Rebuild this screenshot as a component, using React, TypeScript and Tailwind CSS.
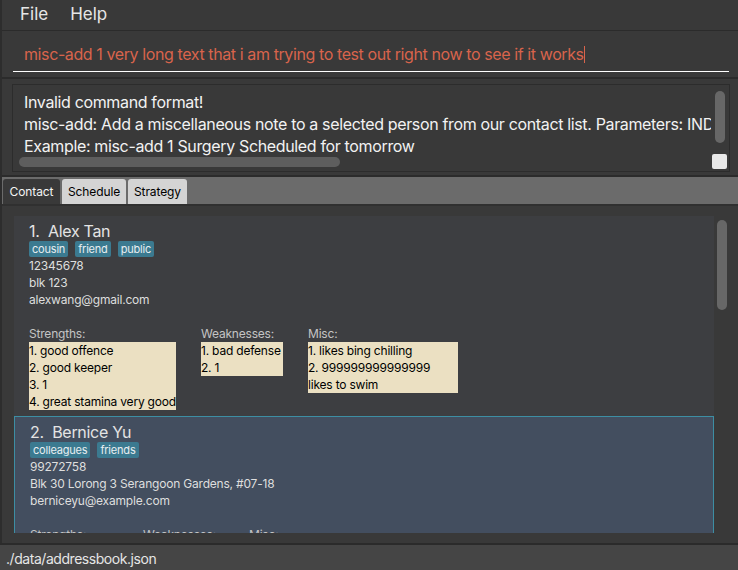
import React from "react";

const FONT = { fontFamily: "Inter, 'Noto Sans', sans-serif" };

function Tag({ label }: { label: string }) {
  return (
    <span className="h-[16px] px-[3px] rounded-[2px] bg-[#3b7a90] text-[#e8eef0] text-[11px] tracking-[-0.2px] leading-[16px]">
      {label}
    </span>
  );
}

function NoteBox({ label, items, width }: { label: string; items: string[]; width: string }) {
  return (
    <div className="flex flex-col">
      <div className="text-[12px] tracking-[-0.2px] leading-[17px] text-[#c4c4c4] whitespace-nowrap">{label}</div>
      <div className={`bg-[#ebe0c2] text-black text-[12px] tracking-[-0.2px] leading-[17px] whitespace-nowrap ${width}`}>
        {items.map((t, i) => (
          <div key={i}>{t}</div>
        ))}
      </div>
    </div>
  );
}

type Person = {
  idx: number;
  name: string;
  tags: string[];
  phone: string;
  address: string;
  email: string;
  strengths: string[];
  weaknesses: string[];
  misc: string[];
  widths: [string, string, string];
  colW: [string, string];
};

const people: Person[] = [
  {
    idx: 1,
    name: "Alex Tan",
    tags: ["cousin", "friend", "public"],
    phone: "12345678",
    address: "blk 123",
    email: "alexwang@gmail.com",
    strengths: ["1. good offence", "2. good keeper", "3. 1", "4. great stamina very good"],
    weaknesses: ["1. bad defense", "2. 1"],
    misc: ["1. likes bing chilling", "2. 999999999999999", "likes to swim"],
    widths: ["w-[147px]", "w-[82px]", "w-[150px]"],
    colW: ["w-[147px]", "w-[82px]"],
  },
  {
    idx: 2,
    name: "Bernice Yu",
    tags: ["colleagues", "friends"],
    phone: "99272758",
    address: "Blk 30 Lorong 3 Serangoon Gardens, #07-18",
    email: "berniceyu@example.com",
    strengths: ["1. good passing"],
    weaknesses: ["1. slow"],
    misc: ["1. plays on weekends"],
    widths: ["w-[88px]", "w-[81px]", "w-[130px]"],
    colW: ["w-[88px]", "w-[81px]"],
  },
];

function Card({ p, selected }: { p: Person; selected?: boolean }) {
  return (
    <div
      className={
        selected
          ? "shrink-0 bg-[#434e5f] border border-[#3d8ea3] pl-[15px] pt-[6px] pb-[5px]"
          : "shrink-0 bg-[#3d3e41] border border-transparent pl-[14px] pt-[5px] pb-[5px]"
      }
    >
      <div className="text-[16px] tracking-[-0.3px] leading-[19px] text-[#e4e4e4] whitespace-nowrap">
        {p.idx}.&nbsp;&nbsp;{p.name}
      </div>
      <div className="flex gap-[7px] h-[16px]">
        {p.tags.map((t) => (
          <Tag key={t} label={t} />
        ))}
      </div>
      <div className="text-[12px] tracking-[-0.2px] leading-[17px] text-[#dedede]">
        <div>{p.phone}</div>
        <div>{p.address}</div>
        <div>{p.email}</div>
        <div className="h-[17px]" />
      </div>
      <div className="flex gap-[25px]">
        <div className={p.colW[0]}>
          <NoteBox label="Strengths:" items={p.strengths} width={p.widths[0]} />
        </div>
        <div className={p.colW[1]}>
          <NoteBox label="Weaknesses:" items={p.weaknesses} width={p.widths[1]} />
        </div>
        <NoteBox label="Misc:" items={p.misc} width={p.widths[2]} />
      </div>
    </div>
  );
}

export default function App() {
  return (
    <div className="w-[738px] h-[570px] flex flex-col bg-[#393939] overflow-hidden" style={FONT}>
      <div className="flex-1 min-h-0 flex flex-col border-l-2 border-[#2d2d2d]">
        {/* Menu bar */}
        <div className="h-[31px] shrink-0 flex items-center border-b border-[#2b2b2b] text-[17px] text-[#e6e6e6]">
          <span className="ml-[18px]">File</span>
          <span className="ml-[22px]">Help</span>
        </div>

        {/* Command box */}
        <div className="h-[48px] shrink-0 pl-[11px] pr-[9px] border-b-2 border-[#2b2b2b]">
          <div className="h-[41px] border-b border-white pt-[13px] pl-[11px] flex items-start">
            <span className="text-[16px] tracking-[-0.4px] leading-[20px] text-[#d8644c] whitespace-nowrap">
              misc-add 1 very long text that i am trying to test out right now to see if it works
            </span>
            <span className="w-[1px] h-[17px] mt-[2px] bg-[#d8644c]" />
          </div>
        </div>

        {/* Result display */}
        <div className="shrink-0 pt-[5px] pb-[3px] pl-[10px] pr-[8px] border-b-2 border-[#2b2b2b]">
          <div className="relative h-[88px] border border-[#2c2c2c] bg-[#393939]">
            <div className="w-[698px] overflow-hidden pt-[6px] pl-[11px] text-[16px] tracking-[-0.35px] leading-[22px] text-[#f2f2f2] whitespace-nowrap">
              <div>Invalid command format!</div>
              <div>
                misc-add: Add a miscellaneous note to a selected person from our contact list. Parameters: INDEX MISC
              </div>
              <div>Example: misc-add 1 Surgery Scheduled for tomorrow</div>
            </div>
            <div className="absolute left-[6px] top-[72px] w-[321px] h-[10px] rounded-full bg-[#5e5e5e]" />
            <div className="absolute left-[702px] top-[6px] w-[10px] h-[52px] rounded-full bg-[#676767]" />
            <div className="absolute left-[699px] top-[69px] w-[15px] h-[15px] rounded-[2px] bg-[#e8e8e8]" />
          </div>
        </div>

        {/* Tab header */}
        <div className="h-[29px] shrink-0 bg-[#6b6b6b] pt-[2px] pl-[1px] flex gap-[2px] border-b-2 border-[#303030] text-[12px] tracking-[-0.1px]">
          <div className="w-[57px] h-[25px] rounded-t-[3px] bg-[#393939] text-[#f4f4f4] flex items-center justify-center">
            Contact
          </div>
          <div className="w-[64px] h-[25px] rounded-t-[3px] bg-[#d4d4d4] text-black flex items-center justify-center">
            Schedule
          </div>
          <div className="w-[59px] h-[25px] rounded-t-[3px] bg-[#d4d4d4] text-black flex items-center justify-center">
            Strategy
          </div>
        </div>

        {/* Tab content */}
        <div className="flex-1 min-h-0 flex py-[10px] pl-[12px]">
          <div className="flex-1 min-w-0 flex flex-col overflow-hidden">
            <Card p={people[0]} />
            <Card p={people[1]} selected />
          </div>
          <div className="w-[24px] shrink-0">
            <div className="ml-[3px] mt-[4px] w-[10px] h-[90px] rounded-full bg-[#676767]" />
          </div>
        </div>
      </div>

      {/* Status bar */}
      <div className="h-[27px] shrink-0 border-t-2 border-[#2b2b2b] bg-[#454545] pl-[6px] pt-[2px] flex items-center text-[14px] tracking-[-0.45px] text-[#e6e6e6]">
        ./data/addressbook.json
      </div>
    </div>
  );
}
